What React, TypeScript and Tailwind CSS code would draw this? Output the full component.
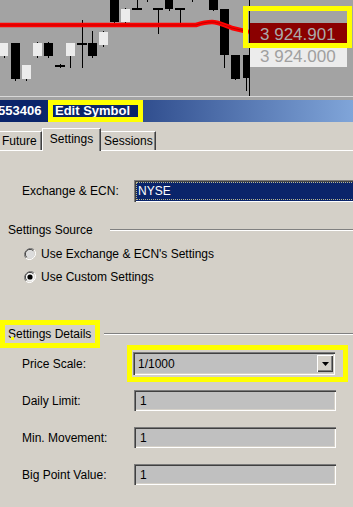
import React from "react";

type Candle = { x: number; w: number; t: number; b: number; wt: number; wb: number; white?: boolean };

const candles: Candle[] = [
  { x: 0, w: 8, t: 43, b: 56, wt: 43, wb: 58, white: true },
  { x: 11, w: 9, t: 43, b: 79, wt: 43, wb: 81 },
  { x: 22, w: 9, t: 65, b: 79, wt: 65, wb: 81, white: true },
  { x: 33, w: 9, t: 43, b: 56, wt: 42, wb: 58, white: true },
  { x: 44, w: 9, t: 43, b: 56, wt: 42, wb: 58 },
  { x: 55, w: 10, t: 65, b: 67, wt: 64, wb: 68 },
  { x: 66, w: 9, t: 43, b: 56, wt: 43, wb: 68, white: true },
  { x: 77, w: 10, t: 43, b: 45, wt: 20, wb: 68 },
  { x: 88, w: 9, t: 43, b: 56, wt: 31, wb: 58 },
  { x: 99, w: 9, t: 32, b: 45, wt: 31, wb: 47, white: true },
  { x: 110, w: 9, t: 0, b: 22, wt: 0, wb: 24 },
  { x: 121, w: 9, t: 9, b: 22, wt: 8, wb: 23, white: true },
  { x: 132, w: 10, t: 8, b: 10, wt: 0, wb: 10 },
  { x: 153, w: 10, t: 8, b: 10, wt: 8, wb: 34 },
  { x: 165, w: 8, t: 0, b: 9, wt: 0, wb: 11 },
  { x: 175, w: 10, t: 8, b: 10, wt: 8, wb: 23 },
  { x: 209, w: 9, t: 0, b: 10, wt: 0, wb: 11 },
  { x: 220, w: 9, t: 9, b: 55, wt: 9, wb: 68 },
  { x: 231, w: 9, t: 55, b: 79, wt: 55, wb: 80 },
  { x: 243, w: 6, t: 55, b: 78, wt: 55, wb: 91 },
];

function Chart() {
  return (
    <svg width="249" height="96" viewBox="0 0 249 96" className="block shrink-0">
      <line x1="147.5" y1="0" x2="147.5" y2="2" stroke="#000" />
      <line x1="192.5" y1="0" x2="192.5" y2="2" stroke="#000" />
      {candles.map((c, i) => {
        const cx = c.x + Math.floor(c.w / 2) + 0.5;
        return (
          <g key={i}>
            <line x1={cx} y1={c.wt} x2={cx} y2={c.wb} stroke="#000" strokeWidth="1" />
            <rect x={c.x} y={c.t} width={c.w} height={c.b - c.t} fill={c.white ? "#ececec" : "#000"} />
          </g>
        );
      })}
      <path
        d="M0 25 H196 C202 23 206 22 212 22 C218 22 224 25 232 28 L249 32"
        fill="none"
        stroke="#ff0000"
        strokeWidth="4.5"
      />
      <path
        d="M0 25 H196 C202 23 206 22 212 22 C218 22 224 25 232 28 L249 32"
        fill="none"
        stroke="#c00000"
        strokeWidth="1"
      />
    </svg>
  );
}

function Radio({ checked }: { checked?: boolean }) {
  return (
    <svg width="12" height="12" viewBox="0 0 12 12" className="block shrink-0">
      <path d="M10.2 1.8 A6 6 0 0 0 1.8 10.2" fill="none" stroke="#808080" strokeWidth="1" />
      <path d="M1.8 10.2 A6 6 0 0 0 10.2 1.8" fill="none" stroke="#ffffff" strokeWidth="1" />
      <circle cx="6" cy="6" r="4.6" fill={checked ? "#f4f4f4" : "#dcdcdc"} />
      <path d="M9.3 2.7 A4.6 4.6 0 0 0 2.7 9.3" fill="none" stroke="#404040" strokeWidth="1" />
      {checked && <circle cx="6" cy="6" r="2.6" fill="#000" />}
    </svg>
  );
}

function TextField({ value }: { value: string }) {
  return (
    <div className="w-[202px] h-[21px] bg-[#c0c0c0] shadow-[inset_1px_1px_0_#7a7a7a,inset_2px_2px_0_#404040,inset_-1px_-1px_0_#ffffff,inset_-2px_-2px_0_#d4d0c8] flex items-center pl-[6px] text-[12px] text-black">
      {value}
    </div>
  );
}

export default function App() {
  return (
    <div className="w-[353px] h-[507px] overflow-hidden bg-[#d4d0c8] relative font-['Liberation_Sans',Arial,sans-serif] text-[12px] text-black">
      {/* chart */}
      <div className="h-[96px] flex bg-[#a3a3a3] relative">
        <Chart />
        <div className="w-px bg-black shrink-0" />
        <div className="flex-1 pt-[23px] flex flex-col">
          <div className="h-[24px] w-[97px] bg-[#8b0000] text-[#aaaaaa] text-[17px] leading-[24px] pl-[10px] whitespace-nowrap">
            3 924.901
          </div>
          <div className="h-[20px] w-[97px] bg-[#ececec] text-[#a0a0a0] text-[17px] leading-[20px] pl-[10px] whitespace-nowrap">
            3 924.000
          </div>
        </div>
        <div className="absolute left-[243px] top-[6px] w-[109px] h-[42px] border-[5px] border-[#ffff00]" />
      </div>
      <div className="h-px bg-[#d8d8d8]" />
      <div className="h-[3px] bg-[#a3a3a3]" />

      {/* title bar */}
      <div className="h-[22px] flex items-center bg-[linear-gradient(to_right,#0a246a_40px,#80a5d9)]">
        <div className="w-[48px] shrink-0 text-white font-bold text-[13px] leading-[22px] ml-[-2px] pl-0">553406</div>
        <div className="ml-[2px] w-[95px] h-[22px] shrink-0 border-[5px] border-[#ffff00] bg-[#0a246a] text-white font-bold text-[13px] leading-[12px] pl-[2px] whitespace-nowrap overflow-hidden">
          Edit Symbol
        </div>
      </div>

      {/* tabs */}
      <div className="pt-[6px] h-[28px] flex items-end relative z-10">
        <div className="w-[42px] h-[19px] shrink-0 border-t border-t-white border-r border-r-[#404040] shadow-[inset_-1px_0_0_#808080] pl-[2px] leading-[18px]">
          Future
        </div>
        <div className="w-[59px] h-[23px] mb-[-1px] shrink-0 bg-[#d4d0c8] border-t border-l border-white border-r border-r-[#404040] shadow-[inset_-1px_0_0_#808080] leading-[20px] text-center">
          Settings
        </div>
        <div className="w-[55px] h-[19px] shrink-0 border-t border-t-white border-r border-r-[#404040] shadow-[inset_-1px_0_0_#808080] pl-[3px] leading-[18px]">
          Sessions
        </div>
      </div>

      {/* content */}
      <div className="border-t border-white flex flex-col">
        <div className="mt-[29px] h-[22px] flex items-center">
          <div className="w-[134px] shrink-0 pl-[22px]">Exchange &amp; ECN:</div>
          <div className="w-[230px] h-[22px] shrink-0 bg-[#0a246a] shadow-[inset_1px_1px_0_#7a7a7a,inset_2px_2px_0_#404040,inset_-1px_-1px_0_#ffffff] p-[2px]">
            <div className="h-full border border-dotted border-[#b8b890] flex items-center pl-[1px] text-white leading-none">
              NYSE
            </div>
          </div>
        </div>

        <div className="mt-[21px] h-[14px] flex items-center">
          <div className="pl-[8px] shrink-0 leading-[14px]">Settings Source</div>
          <div className="ml-[17px] flex-1 h-[2px] border-t border-t-[#808080] border-b border-b-white" />
        </div>

        <div className="mt-[10px] h-[14px] flex items-center pl-[24px]">
          <Radio />
          <span className="ml-[5px] leading-[14px]">Use Exchange &amp; ECN's Settings</span>
        </div>
        <div className="mt-[9px] h-[14px] flex items-center pl-[24px]">
          <Radio checked />
          <span className="ml-[5px] leading-[14px]">Use Custom Settings</span>
        </div>

        <div className="mt-[36px] h-[28px] flex items-center relative">
          <div className="w-[100px] h-[28px] shrink-0 border-[5px] border-[#ffff00] pl-[3px] leading-[18px] whitespace-nowrap">
            Settings Details
          </div>
          <div className="ml-[4px] flex-1 h-[2px] border-t border-t-[#808080] border-b border-b-white" />
          <div className="absolute left-[11px] top-[17px] w-[3px] h-[3px] bg-[#ffff00]" />
        </div>

        <div className="mt-[-3px] flex items-center">
          <div className="w-[127px] shrink-0 pl-[22px] pt-[1px]">Price Scale:</div>
          <div className="border-[5px] border-[#ffff00] pl-[1px] pr-[8px] py-[2px] shrink-0">
            <div className="w-[202px] h-[23px] bg-[#c0c0c0] shadow-[inset_1px_1px_0_#7a7a7a,inset_2px_2px_0_#404040,inset_-1px_-1px_0_#ffffff,inset_-2px_-2px_0_#d4d0c8] flex items-center">
              <span className="flex-1 pl-[5px]">1/1000</span>
              <div className="w-[16px] h-[17px] mr-[2px] bg-[#d4d0c8] shadow-[inset_1px_1px_0_#ffffff,inset_-1px_-1px_0_#404040,inset_-2px_-2px_0_#808080] flex items-center justify-center">
                <svg width="7" height="4" viewBox="0 0 7 4" className="block">
                  <path d="M0 0 H7 L3.5 4 Z" fill="#000" />
                </svg>
              </div>
            </div>
          </div>
        </div>

        <div className="mt-[8px] flex items-center">
          <div className="w-[134px] shrink-0 pl-[22px]">Daily Limit:</div>
          <TextField value="1" />
        </div>
        <div className="mt-[16px] flex items-center">
          <div className="w-[134px] shrink-0 pl-[22px]">Min. Movement:</div>
          <TextField value="1" />
        </div>
        <div className="mt-[16px] flex items-center">
          <div className="w-[134px] shrink-0 pl-[22px]">Big Point Value:</div>
          <TextField value="1" />
        </div>
      </div>
    </div>
  );
}
